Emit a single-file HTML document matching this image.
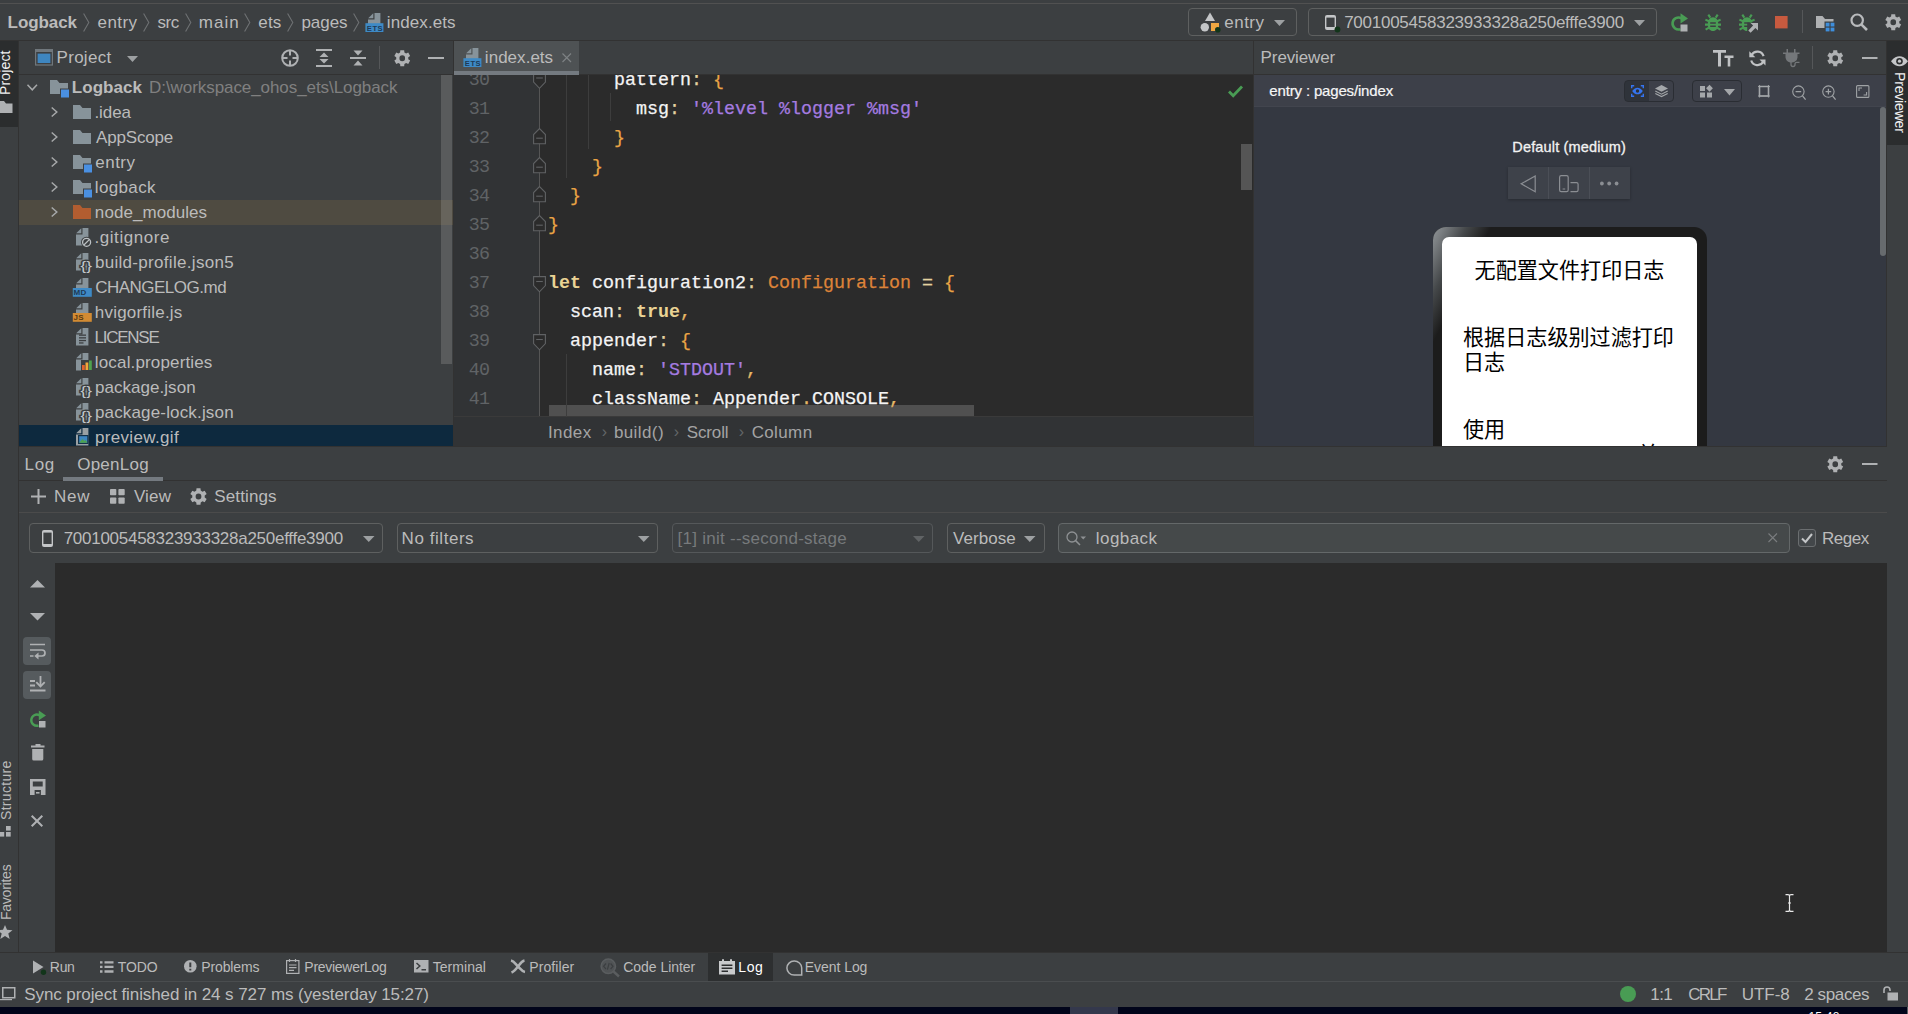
<!DOCTYPE html>
<html><head><meta charset="utf-8"><title>Logback</title>
<style>
html,body{margin:0;padding:0;background:#3c3f41;}
body{width:1908px;height:1014px;position:relative;overflow:hidden;font-family:"Liberation Sans", "Noto Sans CJK SC", sans-serif;}
#bg div{position:absolute;}
.t{position:absolute;white-space:pre;line-height:20px;}
svg{position:absolute;overflow:visible;}
#ed{position:absolute;left:454px;top:75px;width:799px;height:342px;overflow:hidden;font-family:"Liberation Mono", monospace;font-size:18.33px;}
#ed div{position:absolute;white-space:pre;line-height:29px;height:29px;}
.ln{left:0;width:35.5px;text-align:right;color:#606366;letter-spacing:-0.6px;}
.cl{left:94px;color:#f4f4f4;-webkit-text-stroke:0.25px;}
.k{color:#ead394;font-weight:700;-webkit-text-stroke:0;} .b{color:#e9a445;} .s{color:#a57be0;} .c{color:#dd8339;} .p{color:#e3d3a0;} .q{color:#e6b866;}
.vt{position:absolute;white-space:pre;line-height:20px;font-size:14.5px;transform-origin:0 0;}
#pv{position:absolute;left:1254px;top:107px;width:626px;height:339px;overflow:hidden;}
#ph{position:absolute;left:179px;top:120px;width:274px;height:400px;border-radius:13px;background:#1c1c1c;overflow:hidden;}
#gl{position:absolute;left:0;top:0;width:140px;height:140px;background:linear-gradient(116.6deg,#8f9497 0,#7a7e81 10px,#45484a 30px,#1c1c1c 52px);}
#sc{position:absolute;left:9px;top:10px;width:255px;height:400px;border-radius:7px;background:#fff;}
.z{position:absolute;font-family:"Liberation Sans","Noto Sans CJK SC",sans-serif;font-size:21.1px;line-height:24.5px;color:#000;white-space:normal;word-break:break-all;}
.box{position:absolute;border:1px solid #5e6060;border-radius:4px;box-sizing:border-box;}
</style></head><body>
<div id="bg">
<div style="left:0px;top:0px;width:1908px;height:3px;background:#3c3f41;"></div>
<div style="left:0px;top:3px;width:1908px;height:1px;background:#515151;"></div>
<div style="left:0px;top:4px;width:1908px;height:36px;background:#3c3f41;"></div>
<div style="left:0px;top:40px;width:1908px;height:1px;background:#323232;"></div>
<div style="left:0px;top:41px;width:18px;height:912px;background:#3c3f41;"></div>
<div style="left:18px;top:41px;width:1px;height:912px;background:#323232;"></div>
<div style="left:0px;top:41px;width:18px;height:86px;background:#2b2d2e;"></div>
<div style="left:19px;top:41px;width:434px;height:34px;background:#3c3f41;"></div>
<div style="left:19px;top:74px;width:434px;height:1px;background:#323232;"></div>
<div style="left:19px;top:75px;width:434px;height:371px;background:#3c3f41;"></div>
<div style="left:19px;top:200px;width:434px;height:25px;background:#4f4b41;"></div>
<div style="left:441px;top:75px;width:11px;height:289px;background:rgba(166,166,166,0.28);"></div>
<div style="left:19px;top:425px;width:434px;height:21px;background:#0d293e;"></div>
<div style="left:453px;top:41px;width:1px;height:405px;background:#323232;"></div>
<div style="left:454px;top:41px;width:799px;height:34px;background:#3c3f41;"></div>
<div style="left:454px;top:74px;width:799px;height:1px;background:#323232;"></div>
<div style="left:454px;top:41px;width:125px;height:33px;background:#4e5254;"></div>
<div style="left:454px;top:71px;width:125px;height:4px;background:#747a80;"></div>
<div style="left:454px;top:75px;width:799px;height:342px;background:#2b2b2b;"></div>
<div style="left:454px;top:75px;width:85px;height:342px;background:#313335;"></div>
<div style="left:539px;top:75px;width:1px;height:342px;background:#555555;"></div>
<div style="left:454px;top:417px;width:799px;height:29px;background:#313335;"></div>
<div style="left:454px;top:416px;width:799px;height:1px;background:#3a3a3a;"></div>
<div style="left:1241px;top:144px;width:11px;height:46px;background:#555555;"></div>
<div style="left:549px;top:405px;width:425px;height:11px;background:#505050;"></div>
<div style="left:566px;top:75px;width:1px;height:103px;background:#3d3d3d;"></div>
<div style="left:588px;top:75px;width:1px;height:74px;background:#3d3d3d;"></div>
<div style="left:610px;top:93px;width:1px;height:28px;background:#3d3d3d;"></div>
<div style="left:566px;top:354px;width:1px;height:63px;background:#3d3d3d;"></div>
<div style="left:1253px;top:41px;width:1px;height:405px;background:#323232;"></div>
<div style="left:1254px;top:41px;width:633px;height:34px;background:#3c3f41;"></div>
<div style="left:1254px;top:74px;width:633px;height:1px;background:#323232;"></div>
<div style="left:1254px;top:75px;width:633px;height:32px;background:#3d4049;"></div>
<div style="left:1254px;top:106px;width:633px;height:1px;background:#42454e;"></div>
<div style="left:1254px;top:107px;width:633px;height:339px;background:#343841;"></div>
<div style="left:1880px;top:107px;width:6px;height:149px;background:#676b6e;border-radius:3px"></div>
<div style="left:1886px;top:41px;width:1px;height:912px;background:#323232;"></div>
<div style="left:1887px;top:41px;width:21px;height:912px;background:#3c3f41;"></div>
<div style="left:1887px;top:41px;width:21px;height:104px;background:#2b2d2e;"></div>
<div style="left:19px;top:446px;width:1868px;height:507px;background:#3c3f41;"></div>
<div style="left:19px;top:446px;width:1868px;height:1px;background:#323232;"></div>
<div style="left:19px;top:480px;width:1868px;height:1px;background:#323232;"></div>
<div style="left:63px;top:477px;width:100px;height:4px;background:#747a80;"></div>
<div style="left:19px;top:512px;width:1868px;height:1px;background:#4b4b4b;"></div>
<div style="left:55px;top:563px;width:1832px;height:390px;background:#2b2b2b;"></div>
<div style="left:0px;top:953px;width:1908px;height:28px;background:#3c3f41;"></div>
<div style="left:0px;top:952px;width:1908px;height:1px;background:#323232;"></div>
<div style="left:708px;top:953px;width:65px;height:28px;background:#2d2f30;"></div>
<div style="left:0px;top:981px;width:1908px;height:1px;background:#4a4d4f;"></div>
<div style="left:0px;top:982px;width:1908px;height:25px;background:#3c3f41;"></div>
<div style="left:0px;top:1007px;width:1908px;height:7px;background:#01041a;"></div>
<div style="left:1070px;top:1007px;width:48px;height:7px;background:#34384c;"></div>
<div style="left:1907px;top:1007px;width:1px;height:7px;background:#5a5f64;"></div>
</div>
<div id="ed">
<div class="ln" style="top:-9.0px">30</div><div class="cl" style="top:-9.0px"><span class="d">      pattern</span><span class="p">:</span><span class="d"> </span><span class="b">{</span></div>
<div class="ln" style="top:20.0px">31</div><div class="cl" style="top:20.0px"><span class="d">        msg</span><span class="p">:</span><span class="d"> </span><span class="s">&#x27;%level %logger %msg&#x27;</span></div>
<div class="ln" style="top:49.0px">32</div><div class="cl" style="top:49.0px"><span class="d">      </span><span class="b">}</span></div>
<div class="ln" style="top:78.0px">33</div><div class="cl" style="top:78.0px"><span class="d">    </span><span class="b">}</span></div>
<div class="ln" style="top:107.0px">34</div><div class="cl" style="top:107.0px"><span class="d">  </span><span class="b">}</span></div>
<div class="ln" style="top:136.0px">35</div><div class="cl" style="top:136.0px"><span class="b">}</span></div>
<div class="ln" style="top:165.0px">36</div><div class="cl" style="top:165.0px"></div>
<div class="ln" style="top:194.0px">37</div><div class="cl" style="top:194.0px"><span class="k">let</span><span class="d"> configuration2</span><span class="p">:</span><span class="d"> </span><span class="c">Configuration</span><span class="d"> </span><span class="p">=</span><span class="d"> </span><span class="b">{</span></div>
<div class="ln" style="top:223.0px">38</div><div class="cl" style="top:223.0px"><span class="d">  scan</span><span class="p">:</span><span class="d"> </span><span class="k">true</span><span class="q">,</span></div>
<div class="ln" style="top:252.0px">39</div><div class="cl" style="top:252.0px"><span class="d">  appender</span><span class="p">:</span><span class="d"> </span><span class="b">{</span></div>
<div class="ln" style="top:281.0px">40</div><div class="cl" style="top:281.0px"><span class="d">    name</span><span class="p">:</span><span class="d"> </span><span class="s">&#x27;STDOUT&#x27;</span><span class="q">,</span></div>
<div class="ln" style="top:310.0px">41</div><div class="cl" style="top:310.0px"><span class="d">    className</span><span class="p">:</span><span class="d"> Appender</span><span class="q">.</span><span class="d">CONSOLE</span><span class="q">,</span></div>
</div>
<svg style="left:83px;top:13px" width="7" height="19" viewBox="0 0 7 19"><path fill="none" stroke="#6e7173" stroke-width="1.1" d="M0.6,0.4L5.8,9.5L0.6,18.6"/></svg>
<svg style="left:143px;top:13px" width="7" height="19" viewBox="0 0 7 19"><path fill="none" stroke="#6e7173" stroke-width="1.1" d="M0.6,0.4L5.8,9.5L0.6,18.6"/></svg>
<svg style="left:184.5px;top:13px" width="7" height="19" viewBox="0 0 7 19"><path fill="none" stroke="#6e7173" stroke-width="1.1" d="M0.6,0.4L5.8,9.5L0.6,18.6"/></svg>
<svg style="left:243.5px;top:13px" width="7" height="19" viewBox="0 0 7 19"><path fill="none" stroke="#6e7173" stroke-width="1.1" d="M0.6,0.4L5.8,9.5L0.6,18.6"/></svg>
<svg style="left:286.5px;top:13px" width="7" height="19" viewBox="0 0 7 19"><path fill="none" stroke="#6e7173" stroke-width="1.1" d="M0.6,0.4L5.8,9.5L0.6,18.6"/></svg>
<svg style="left:353px;top:13px" width="7" height="19" viewBox="0 0 7 19"><path fill="none" stroke="#6e7173" stroke-width="1.1" d="M0.6,0.4L5.8,9.5L0.6,18.6"/></svg>
<svg style="left:363.6px;top:13px" width="24" height="19" viewBox="-4 0 24 19"><path fill="#87939a" d="M6.5,0H12.4V17.6H0V6.5H6.5Z"/><path fill="#87939a" d="M5.3,0.2V5.3H0.2Z"/><rect x="-2.6" y="10.2" width="18" height="8.8" fill="#3e8ac6"/><text x="-1.2" y="17.6" font-size="7.6" font-weight="700" font-family="Liberation Sans, sans-serif" fill="#1e3a55" letter-spacing="0.5">ETS</text></svg>
<div class="box" style="left:1188px;top:8px;width:109px;height:28px"></div>
<svg style="left:1200px;top:12px" width="22" height="21" viewBox="0 0 22 21"><path fill="#c4c6c8" d="M10,0.5L15,9H5Z"/><circle cx="4.8" cy="15.2" r="4.2" fill="#c4c6c8"/><rect x="11" y="11" width="8" height="8" fill="#f0a742"/><circle cx="17.8" cy="17.8" r="2.8" fill="#12351a"/></svg>
<svg style="left:1273.5px;top:19.5px" width="11" height="6" viewBox="0 0 11 6"><path fill="#9da0a2" d="M0,0H11L5.5,6Z"/></svg>
<div class="box" style="left:1308px;top:8px;width:349px;height:28px"></div>
<svg style="left:1324.5px;top:14.5px" width="11" height="15" viewBox="0 0 11 15"><rect x="0" y="0" width="11" height="15" rx="2" fill="#c4c6c8"/><rect x="1.4" y="2.6" width="8.2" height="9.4" fill="#3c3f41"/></svg>
<svg style="left:1334px;top:26px" width="7" height="7" viewBox="0 0 7 7"><circle cx="3.5" cy="3.5" r="2.9" fill="#12351a"/></svg>
<svg style="left:1634px;top:19.5px" width="11" height="6" viewBox="0 0 11 6"><path fill="#9da0a2" d="M0,0H11L5.5,6Z"/></svg>
<svg style="left:1671px;top:13px" width="18" height="19" viewBox="0 0 18 19"><path fill="none" stroke="#499c54" stroke-width="2.6" d="M9.5,16.2A6,6 0 1 1 10.5,5.3"/><path fill="#499c54" d="M9.5,0.3L17,5.6L9.5,10.6Z"/><rect x="9.5" y="11.5" width="7" height="7" fill="#afb1b3"/></svg>
<svg style="left:1705px;top:13.5px" width="20" height="19" viewBox="0 0 20 19"><path fill="#499c54" d="M8,3.2C11.8,3.2 13.2,6.5 13.2,10.5C13.2,14.5 11,17 8,17C5,17 2.8,14.5 2.8,10.5C2.8,6.5 4.2,3.2 8,3.2Z"/><path stroke="#499c54" stroke-width="2.1" fill="none" d="M5.3,3.6L3.3,0.6M10.7,3.6L12.7,0.6M4,7.2L0.4,5.6M3.5,10.6H0M4,13.6L0.6,15.6M12,7.2L15.6,5.6M12.5,10.6H16M12,13.6L15.4,15.6"/><path stroke="#3c3f41" stroke-width="1.6" d="M5.2,9H10.8M5.2,12.3H10.8"/></svg>
<svg style="left:1739px;top:13.5px" width="20" height="19" viewBox="0 0 20 19"><path fill="#499c54" d="M8,3.2C11.8,3.2 13.2,6.5 13.2,10.5C13.2,14.5 11,17 8,17C5,17 2.8,14.5 2.8,10.5C2.8,6.5 4.2,3.2 8,3.2Z"/><path stroke="#499c54" stroke-width="2.1" fill="none" d="M5.3,3.6L3.3,0.6M10.7,3.6L12.7,0.6M4,7.2L0.4,5.6M3.5,10.6H0M4,13.6L0.6,15.6M12,7.2L15.6,5.6M12.5,10.6H16M12,13.6L15.4,15.6"/><path stroke="#3c3f41" stroke-width="1.6" d="M5.2,9H10.8M5.2,12.3H10.8"/><rect x="8.2" y="8.6" width="11" height="10" fill="#3c3f41"/><path fill="#afb1b3" d="M11.5,9H19V16.5L16.4,13.9L11.6,18.7L9.3,16.4L14.1,11.6Z"/></svg>
<svg style="left:1775px;top:16px" width="13" height="13" viewBox="0 0 13 13"><rect width="12.6" height="12.4" fill="#c75a3f"/></svg>
<svg style="left:1802px;top:10px" width="1" height="23" viewBox="0 0 1 23"><rect width="1" height="23" fill="#555759"/></svg>
<svg style="left:1816px;top:16px" width="19" height="16" viewBox="0 0 19 16"><path fill="#afb1b3" d="M0,0H6.5L9,3H17.5V12H0Z"/><rect x="8.5" y="5.5" width="10.5" height="10.5" fill="#3c3f41"/><rect x="9.7" y="6.7" width="3.8" height="3.8" fill="#3e8edc"/><rect x="14.6" y="6.7" width="3.8" height="3.8" fill="#3e8edc"/><rect x="9.7" y="11.6" width="3.8" height="3.8" fill="#3e8edc"/><rect x="14.6" y="11.6" width="3.8" height="3.8" fill="#3e8edc"/></svg>
<svg style="left:1850px;top:13px" width="18" height="18" viewBox="0 0 18 18"><circle cx="7.2" cy="7.2" r="5.7" fill="none" stroke="#b8babc" stroke-width="2.2"/><path stroke="#b8babc" stroke-width="2.6" d="M11.3,11.3L17,17"/></svg>
<svg style="left:1885px;top:13.5px" width="16.5" height="16.5" viewBox="0 0 16.5 16.5"><path fill-rule="evenodd" fill="#afb1b3" d="M6.09,2.54 L6.32,0.23 L10.18,0.23 L10.41,2.54 L12.12,3.53 L14.23,2.57 L16.16,5.91 L14.27,7.26 L14.27,9.24 L16.16,10.59 L14.23,13.93 L12.12,12.97 L10.41,13.96 L10.18,16.27 L6.32,16.27 L6.09,13.96 L4.38,12.97 L2.27,13.93 L0.34,10.59 L2.23,9.24 L2.23,7.26 L0.34,5.91 L2.27,2.57 L4.38,3.53Z M11.05,8.25 A2.805,2.805 0 1 0 5.45,8.25 A2.805,2.805 0 1 0 11.05,8.25Z"/></svg>
<svg style="left:35px;top:49px" width="18" height="17" viewBox="0 0 18 17"><rect width="18" height="16.6" fill="#70777c"/><rect x="1.2" y="3" width="15.6" height="12.4" fill="#3c3f41"/><rect x="2.6" y="4.6" width="12.8" height="9.4" fill="#3e86c0"/></svg>
<svg style="left:127px;top:55.5px" width="11" height="6" viewBox="0 0 11 6"><path fill="#9da0a2" d="M0,0H11L5.5,6Z"/></svg>
<svg style="left:281px;top:49px" width="18" height="18" viewBox="0 0 18 18"><circle cx="9" cy="9" r="7.8" fill="none" stroke="#afb1b3" stroke-width="2"/><path stroke="#afb1b3" stroke-width="2" d="M9,1V6.5M9,11.5V17M1,9H6.5M11.5,9H17"/></svg>
<svg style="left:316px;top:49px" width="16" height="18" viewBox="0 0 16 18"><rect y="0" width="16" height="2" fill="#afb1b3"/><rect y="16" width="16" height="2" fill="#afb1b3"/><path fill="#afb1b3" d="M8,3.5L12.5,8H3.5Z M8,14.5L12.5,10H3.5Z"/></svg>
<svg style="left:350px;top:49px" width="16" height="18" viewBox="0 0 16 18"><rect y="8" width="16" height="2" fill="#afb1b3"/><path fill="#afb1b3" d="M8,6.5L12.5,1.5H3.5Z M8,11.5L12.5,16.5H3.5Z"/></svg>
<svg style="left:379px;top:46px" width="1" height="23" viewBox="0 0 1 23"><rect width="1" height="23" fill="#555759"/></svg>
<svg style="left:394px;top:49.5px" width="16.5" height="16.5" viewBox="0 0 16.5 16.5"><path fill-rule="evenodd" fill="#afb1b3" d="M6.09,2.54 L6.32,0.23 L10.18,0.23 L10.41,2.54 L12.12,3.53 L14.23,2.57 L16.16,5.91 L14.27,7.26 L14.27,9.24 L16.16,10.59 L14.23,13.93 L12.12,12.97 L10.41,13.96 L10.18,16.27 L6.32,16.27 L6.09,13.96 L4.38,12.97 L2.27,13.93 L0.34,10.59 L2.23,9.24 L2.23,7.26 L0.34,5.91 L2.27,2.57 L4.38,3.53Z M11.05,8.25 A2.805,2.805 0 1 0 5.45,8.25 A2.805,2.805 0 1 0 11.05,8.25Z"/></svg>
<svg style="left:428px;top:57px" width="16" height="2" viewBox="0 0 16 2"><rect width="16" height="2" fill="#afb1b3"/></svg>
<svg style="left:27px;top:84px" width="10.5" height="6.5" viewBox="0 0 10.5 6.5"><path fill="none" stroke="#a6a8a9" stroke-width="1.5" d="M0.5,0.7L5.25,5.8L10.0,0.7"/></svg>
<svg style="left:50px;top:79.5px" width="20" height="19" viewBox="0 0 20 19"><path fill="#87939a" d="M0,0H7L9.5,3H18V14H0Z"/><rect x="10" y="8.5" width="9.5" height="9.5" fill="#3c3f41"/><rect x="11" y="9.5" width="8" height="8" fill="#4a90e2"/></svg>
<svg style="left:51px;top:107.0px" width="6.5" height="10" viewBox="0 0 6.5 10"><path fill="none" stroke="#a6a8a9" stroke-width="1.5" d="M0.7,0.5L5.8,5.0L0.7,9.5"/></svg>
<svg style="left:73px;top:104.5px" width="20" height="19" viewBox="0 0 20 19"><path fill="#87939a" d="M0,0H7L9.5,3H18V14H0Z"/></svg>
<svg style="left:51px;top:132.0px" width="6.5" height="10" viewBox="0 0 6.5 10"><path fill="none" stroke="#a6a8a9" stroke-width="1.5" d="M0.7,0.5L5.8,5.0L0.7,9.5"/></svg>
<svg style="left:73px;top:129.5px" width="20" height="19" viewBox="0 0 20 19"><path fill="#87939a" d="M0,0H7L9.5,3H18V14H0Z"/></svg>
<svg style="left:51px;top:157.0px" width="6.5" height="10" viewBox="0 0 6.5 10"><path fill="none" stroke="#a6a8a9" stroke-width="1.5" d="M0.7,0.5L5.8,5.0L0.7,9.5"/></svg>
<svg style="left:73px;top:154.5px" width="20" height="19" viewBox="0 0 20 19"><path fill="#87939a" d="M0,0H7L9.5,3H18V14H0Z"/><rect x="10" y="8.5" width="9.5" height="9.5" fill="#3c3f41"/><rect x="11" y="9.5" width="8" height="8" fill="#4a90e2"/></svg>
<svg style="left:51px;top:182.0px" width="6.5" height="10" viewBox="0 0 6.5 10"><path fill="none" stroke="#a6a8a9" stroke-width="1.5" d="M0.7,0.5L5.8,5.0L0.7,9.5"/></svg>
<svg style="left:73px;top:179.5px" width="20" height="19" viewBox="0 0 20 19"><path fill="#87939a" d="M0,0H7L9.5,3H18V14H0Z"/><rect x="10" y="8.5" width="9.5" height="9.5" fill="#3c3f41"/><rect x="11" y="9.5" width="8" height="8" fill="#4a90e2"/></svg>
<svg style="left:51px;top:207.0px" width="6.5" height="10" viewBox="0 0 6.5 10"><path fill="none" stroke="#a6a8a9" stroke-width="1.5" d="M0.7,0.5L5.8,5.0L0.7,9.5"/></svg>
<svg style="left:73px;top:204.5px" width="20" height="19" viewBox="0 0 20 19"><path fill="#b25d30" d="M0,0H7L9.5,3H18V14H0Z"/></svg>
<svg style="left:72px;top:228px" width="24" height="19" viewBox="-4 0 24 19"><path fill="#87939a" d="M6.5,0H12.4V17.6H0V6.5H6.5Z"/><path fill="#87939a" d="M5.3,0.2V5.3H0.2Z"/><circle cx="10.6" cy="14.3" r="5.6" fill="#3c3f41"/><circle cx="10.6" cy="14.3" r="4" fill="none" stroke="#bcc1c4" stroke-width="1.3"/><path d="M7.9,17L13.3,11.6" stroke="#bcc1c4" stroke-width="1.3"/></svg>
<svg style="left:72px;top:253px" width="24" height="19" viewBox="-4 0 24 19"><path fill="#87939a" d="M6.5,0H12.4V17.6H0V6.5H6.5Z"/><path fill="#87939a" d="M5.3,0.2V5.3H0.2Z"/><text x="4.6" y="16.6" font-size="12.5" font-family="Liberation Sans, sans-serif" fill="#c6cbce" stroke="#3c3f41" stroke-width="2.6" paint-order="stroke" textLength="11.4" lengthAdjust="spacingAndGlyphs">{}</text></svg>
<svg style="left:72px;top:278px" width="24" height="19" viewBox="-4 0 24 19"><path fill="#87939a" d="M6.5,0H12.4V17.6H0V6.5H6.5Z"/><path fill="#87939a" d="M5.3,0.2V5.3H0.2Z"/><rect x="-3.2" y="10" width="19" height="8.8" fill="#3e8ac6"/><text x="-2.4" y="17.4" font-size="8" font-weight="700" font-family="Liberation Sans, sans-serif" fill="#1e3a55" letter-spacing="0.3">MD</text></svg>
<svg style="left:72px;top:303px" width="24" height="19" viewBox="-4 0 24 19"><path fill="#87939a" d="M6.5,0H12.4V17.6H0V6.5H6.5Z"/><path fill="#87939a" d="M5.3,0.2V5.3H0.2Z"/><rect x="-3.2" y="10" width="19" height="8.8" fill="#d28b33"/><text x="-2.4" y="17.4" font-size="8" font-weight="700" font-family="Liberation Sans, sans-serif" fill="#5a3a12" letter-spacing="0.3">JS</text></svg>
<svg style="left:72px;top:328px" width="24" height="19" viewBox="-4 0 24 19"><path fill="#87939a" d="M6.5,0H12.4V17.6H0V6.5H6.5Z"/><path fill="#87939a" d="M5.3,0.2V5.3H0.2Z"/><rect x="3" y="6.5" width="7" height="1.3" fill="#3c3f41"/><rect x="3" y="9.2" width="7" height="1.3" fill="#3c3f41"/><rect x="3" y="11.9" width="7" height="1.3" fill="#3c3f41"/><rect x="3" y="14.3" width="4.5" height="1.3" fill="#3c3f41"/></svg>
<svg style="left:72px;top:353px" width="24" height="19" viewBox="-4 0 24 19"><path fill="#87939a" d="M6.5,0H12.4V17.6H0V6.5H6.5Z"/><path fill="#87939a" d="M5.3,0.2V5.3H0.2Z"/><rect x="5" y="7" width="11.5" height="11" fill="#3c3f41"/><rect x="6" y="12" width="2.8" height="5" fill="#e0632f"/><rect x="9.5" y="9.5" width="2.8" height="7.5" fill="#f2a73b"/><rect x="13" y="7.5" width="2.8" height="9.5" fill="#4ea24e"/></svg>
<svg style="left:72px;top:378px" width="24" height="19" viewBox="-4 0 24 19"><path fill="#87939a" d="M6.5,0H12.4V17.6H0V6.5H6.5Z"/><path fill="#87939a" d="M5.3,0.2V5.3H0.2Z"/><text x="4.6" y="16.6" font-size="12.5" font-family="Liberation Sans, sans-serif" fill="#c6cbce" stroke="#3c3f41" stroke-width="2.6" paint-order="stroke" textLength="11.4" lengthAdjust="spacingAndGlyphs">{}</text></svg>
<svg style="left:72px;top:403px" width="24" height="19" viewBox="-4 0 24 19"><path fill="#87939a" d="M6.5,0H12.4V17.6H0V6.5H6.5Z"/><path fill="#87939a" d="M5.3,0.2V5.3H0.2Z"/><text x="4.6" y="16.6" font-size="12.5" font-family="Liberation Sans, sans-serif" fill="#c6cbce" stroke="#3c3f41" stroke-width="2.6" paint-order="stroke" textLength="11.4" lengthAdjust="spacingAndGlyphs">{}</text></svg>
<svg style="left:72px;top:428px" width="24" height="19" viewBox="-4 0 24 19"><path fill="#9aa0a3" d="M6.5,0H12.4V17.6H0V6.5H6.5Z"/><path fill="#9aa0a3" d="M5.3,0.2V5.3H0.2Z"/><rect x="2" y="7" width="10.5" height="9" fill="#13324a"/><rect x="3.2" y="8.2" width="8.1" height="6.6" fill="#3e86c0"/><path d="M3.2,14.8L6.5,11L8.5,13L9.8,12L11.3,14.8Z" fill="#4ea24e"/></svg>
<svg style="left:461.6px;top:48px" width="24" height="19" viewBox="-4 0 24 19"><path fill="#87939a" d="M6.5,0H12.4V17.6H0V6.5H6.5Z"/><path fill="#87939a" d="M5.3,0.2V5.3H0.2Z"/><rect x="-2.6" y="10.2" width="18" height="8.8" fill="#3e8ac6"/><text x="-1.2" y="17.6" font-size="7.6" font-weight="700" font-family="Liberation Sans, sans-serif" fill="#1e3a55" letter-spacing="0.5">ETS</text></svg>
<svg style="left:561.5px;top:52.5px" width="9.5" height="9.5" viewBox="0 0 9.5 9.5"><path stroke="#7d8183" stroke-width="1.2" d="M0.5,0.5L9.0,9.0M9.0,0.5L0.5,9.0"/></svg>
<svg style="overflow:hidden;left:533px;top:75px" width="13" height="14.5" viewBox="0 2.5 13 14.5"><path fill="#2b2b2b" stroke="#606264" stroke-width="1.1" d="M0.6,0.6H12.4V9.6L6.5,15.8L0.6,9.6Z"/><path stroke="#606264" stroke-width="1.1" d="M3.2,5.5H9.8"/></svg>
<svg style="left:533px;top:127.5px" width="13" height="17" viewBox="0 0 13 17"><path fill="#2b2b2b" stroke="#606264" stroke-width="1.1" d="M0.6,15.8H12.4V6.6L6.5,0.6L0.6,6.6Z"/><path stroke="#606264" stroke-width="1.1" d="M3.2,10.2H9.8"/></svg>
<svg style="left:533px;top:156.5px" width="13" height="17" viewBox="0 0 13 17"><path fill="#2b2b2b" stroke="#606264" stroke-width="1.1" d="M0.6,15.8H12.4V6.6L6.5,0.6L0.6,6.6Z"/><path stroke="#606264" stroke-width="1.1" d="M3.2,10.2H9.8"/></svg>
<svg style="left:533px;top:185.5px" width="13" height="17" viewBox="0 0 13 17"><path fill="#2b2b2b" stroke="#606264" stroke-width="1.1" d="M0.6,15.8H12.4V6.6L6.5,0.6L0.6,6.6Z"/><path stroke="#606264" stroke-width="1.1" d="M3.2,10.2H9.8"/></svg>
<svg style="left:533px;top:214.5px" width="13" height="17" viewBox="0 0 13 17"><path fill="#2b2b2b" stroke="#606264" stroke-width="1.1" d="M0.6,15.8H12.4V6.6L6.5,0.6L0.6,6.6Z"/><path stroke="#606264" stroke-width="1.1" d="M3.2,10.2H9.8"/></svg>
<svg style="left:533px;top:275.5px" width="13" height="17" viewBox="0 0 13 17"><path fill="#2b2b2b" stroke="#606264" stroke-width="1.1" d="M0.6,0.6H12.4V9.6L6.5,15.8L0.6,9.6Z"/><path stroke="#606264" stroke-width="1.1" d="M3.2,5.5H9.8"/></svg>
<svg style="left:533px;top:333.5px" width="13" height="17" viewBox="0 0 13 17"><path fill="#2b2b2b" stroke="#606264" stroke-width="1.1" d="M0.6,0.6H12.4V9.6L6.5,15.8L0.6,9.6Z"/><path stroke="#606264" stroke-width="1.1" d="M3.2,5.5H9.8"/></svg>
<svg style="left:1228px;top:85px" width="15" height="13" viewBox="0 0 15 13"><path fill="none" stroke="#499c54" stroke-width="2.8" d="M1,6.5L5.2,10.7L14,1.5"/></svg>
<svg style="left:1713px;top:49.5px" width="21" height="17" viewBox="0 0 21 17"><path fill="#c0c2c4" d="M0,0H13V2.8H8V16.5H5V2.8H0Z M11.5,5.5H20.5V8H17.3V16.5H14.7V8H11.5Z"/></svg>
<svg style="left:1749px;top:50px" width="17" height="17" viewBox="0 0 17 17"><path fill="none" stroke="#c0c2c4" stroke-width="2.2" d="M14.6,6.2A6.6,6.6 0 0 0 2.6,5 M2.2,10.5A6.6,6.6 0 0 0 14.2,11.8"/><path fill="#c0c2c4" d="M0.3,1.2V7.2H6.3Z M16.5,15.6V9.6H10.5Z"/></svg>
<svg style="left:1782px;top:49px" width="19" height="19" viewBox="0 0 19 19"><path fill="#74777a" d="M4.5,0H6V3.5H12V0H13.5V3.5H17.5V5H15.5V8.5A6,6 0 0 1 10,13.5H8A6,6 0 0 1 3.5,8.5V5H1V3.5H4.5Z"/><path fill="none" stroke="#74777a" stroke-width="1.3" d="M9,13V15.5A2,2 0 0 0 13,15.5V15A1.6,1.6 0 0 1 14.8,13.4H17.5"/></svg>
<svg style="left:1812px;top:46px" width="1" height="23" viewBox="0 0 1 23"><rect width="1" height="23" fill="#555759"/></svg>
<svg style="left:1827px;top:50px" width="16.5" height="16.5" viewBox="0 0 16.5 16.5"><path fill-rule="evenodd" fill="#afb1b3" d="M6.09,2.54 L6.32,0.23 L10.18,0.23 L10.41,2.54 L12.12,3.53 L14.23,2.57 L16.16,5.91 L14.27,7.26 L14.27,9.24 L16.16,10.59 L14.23,13.93 L12.12,12.97 L10.41,13.96 L10.18,16.27 L6.32,16.27 L6.09,13.96 L4.38,12.97 L2.27,13.93 L0.34,10.59 L2.23,9.24 L2.23,7.26 L0.34,5.91 L2.27,2.57 L4.38,3.53Z M11.05,8.25 A2.805,2.805 0 1 0 5.45,8.25 A2.805,2.805 0 1 0 11.05,8.25Z"/></svg>
<svg style="left:1861.5px;top:57px" width="15.5" height="2" viewBox="0 0 15.5 2"><rect width="15.5" height="2" fill="#afb1b3"/></svg>
<div style="position:absolute;left:1624px;top:80px;width:50px;height:22px;box-sizing:border-box;border:1px solid #2a2d33;border-radius:4px;background:linear-gradient(90deg,#2f333a 0,#2f333a 24px,#3d4049 24px)"></div>
<svg style="left:1630.5px;top:85px" width="13" height="12" viewBox="0 0 13 12"><path fill="none" stroke="#3574f0" stroke-width="1.4" d="M0.7,3.2V0.7H3.2M9.8,0.7H12.3V3.2M12.3,8.8V11.3H9.8M3.2,11.3H0.7V8.8"/><path fill="#3574f0" d="M1.2,6C3,3.3 4.8,2.7 6.5,2.7S10,3.3 11.8,6C10,8.7 8.2,9.3 6.5,9.3S3,8.7 1.2,6Z"/><circle cx="6.5" cy="6" r="1.7" fill="#2e3239"/></svg>
<svg style="left:1654.5px;top:85px" width="13" height="12" viewBox="0 0 13 12"><path fill="#a4a7aa" d="M6.5,0L13,3.4L6.5,6.8L0,3.4Z"/><path fill="none" stroke="#a4a7aa" stroke-width="1.1" d="M0.3,6L6.5,9.2L12.7,6M0.3,8.4L6.5,11.6L12.7,8.4"/></svg>
<div style="position:absolute;left:1692px;top:80px;width:50px;height:22px;box-sizing:border-box;border:1px solid #2a2d33;border-radius:4px;"></div>
<svg style="left:1699.5px;top:85px" width="14" height="13" viewBox="0 0 14 13"><rect x="0" y="1" width="5" height="5" fill="#a4a7aa"/><rect x="0" y="7.5" width="5" height="5" fill="#a4a7aa"/><rect x="7" y="7.5" width="5" height="5" fill="#a4a7aa"/><path fill="#a4a7aa" d="M9.5,-0.2L12.9,3.3L9.5,6.8L6.1,3.3Z"/></svg>
<svg style="left:1723.5px;top:88.5px" width="11" height="6.5" viewBox="0 0 11 6.5"><path fill="#a4a7aa" d="M0,0H11L5.5,6.5Z"/></svg>
<svg style="left:1758px;top:85px" width="12" height="13" viewBox="0 0 12 13"><rect x="1.5" y="1.5" width="9" height="9.5" fill="none" stroke="#a4a7aa" stroke-width="1.5"/><path stroke="#a4a7aa" stroke-width="1.2" d="M0,1.5H12M0,11H12M1.5,0V12.5M10.5,0V12.5" opacity="0.85"/></svg>
<svg style="left:1791.5px;top:84.5px" width="15" height="16" viewBox="0 0 15 16"><circle cx="6.4" cy="6.6" r="5.7" fill="none" stroke="#9fa2a5" stroke-width="1.1"/><path stroke="#9fa2a5" stroke-width="1.2" d="M3.6,6.6H9.2M10.6,11L13.6,14.6"/></svg>
<svg style="left:1821.5px;top:84.5px" width="15" height="16" viewBox="0 0 15 16"><circle cx="6.4" cy="6.6" r="5.7" fill="none" stroke="#9fa2a5" stroke-width="1.1"/><path stroke="#9fa2a5" stroke-width="1.2" d="M3.6,6.6H9.2M6.4,3.8V9.4M10.6,11L13.6,14.6"/></svg>
<svg style="left:1856px;top:84.5px" width="14" height="13" viewBox="0 0 14 13"><rect x="0.6" y="0.6" width="12.3" height="11.8" rx="1" fill="none" stroke="#9fa2a5" stroke-width="1.1"/><path fill="none" stroke="#9fa2a5" stroke-width="1.1" d="M3,6V3H6M7.6,10H10.6V7"/></svg>
<div style="position:absolute;left:1508px;top:167px;width:122px;height:32px;background:#3e424a;box-shadow:0 1px 3px rgba(0,0,0,0.25)"></div>
<div style="position:absolute;left:1548px;top:167px;width:1px;height:32px;background:#4b4f57"></div>
<div style="position:absolute;left:1589px;top:167px;width:1px;height:32px;background:#4b4f57"></div>
<svg style="left:1519.5px;top:174.5px" width="17" height="18" viewBox="0 0 17 18"><path fill="none" stroke="#8b8e93" stroke-width="1.2" d="M15.2,1L1.2,8.8L15.2,16.8Z"/></svg>
<svg style="left:1559px;top:174.5px" width="21" height="18" viewBox="0 0 21 18"><rect x="0.6" y="0.6" width="8.6" height="16" rx="1.6" fill="none" stroke="#8b8e93" stroke-width="1.2"/><path stroke="#8b8e93" stroke-width="1" d="M3.6,14H6.2"/><path fill="none" stroke="#8b8e93" stroke-width="1.2" d="M11.5,7.6H17.5A1.6,1.6 0 0 1 19.1,9.2V15A1.6,1.6 0 0 1 17.5,16.6H11.5"/></svg>
<svg style="left:1599px;top:181px" width="21" height="5" viewBox="0 0 21 5"><circle cx="2.9" cy="2.5" r="1.9" fill="#8b8e93"/><circle cx="10.2" cy="2.5" r="1.9" fill="#8b8e93"/><circle cx="17.6" cy="2.5" r="1.9" fill="#8b8e93"/></svg>
<svg style="left:1827px;top:456px" width="16.5" height="16.5" viewBox="0 0 16.5 16.5"><path fill-rule="evenodd" fill="#afb1b3" d="M6.09,2.54 L6.32,0.23 L10.18,0.23 L10.41,2.54 L12.12,3.53 L14.23,2.57 L16.16,5.91 L14.27,7.26 L14.27,9.24 L16.16,10.59 L14.23,13.93 L12.12,12.97 L10.41,13.96 L10.18,16.27 L6.32,16.27 L6.09,13.96 L4.38,12.97 L2.27,13.93 L0.34,10.59 L2.23,9.24 L2.23,7.26 L0.34,5.91 L2.27,2.57 L4.38,3.53Z M11.05,8.25 A2.805,2.805 0 1 0 5.45,8.25 A2.805,2.805 0 1 0 11.05,8.25Z"/></svg>
<svg style="left:1861.5px;top:463px" width="15.5" height="2" viewBox="0 0 15.5 2"><rect width="15.5" height="2" fill="#afb1b3"/></svg>
<svg style="left:31px;top:489px" width="15" height="15" viewBox="0 0 15 15"><path stroke="#afb1b3" stroke-width="2" d="M7.5,0V15M0,7.5H15"/></svg>
<svg style="left:110px;top:489px" width="15" height="15" viewBox="0 0 15 15"><rect x="0" y="0" width="6.3" height="6.3" rx="0.8" fill="#afb1b3"/><rect x="8.4" y="0" width="6.3" height="6.3" rx="0.8" fill="#afb1b3"/><rect x="0" y="8.4" width="6.3" height="6.3" rx="0.8" fill="#afb1b3"/><rect x="8.4" y="8.4" width="6.3" height="6.3" rx="0.8" fill="#afb1b3"/></svg>
<svg style="left:190px;top:488px" width="17" height="17" viewBox="0 0 17 17"><path fill-rule="evenodd" fill="#afb1b3" d="M6.28,2.62 L6.52,0.23 L10.48,0.23 L10.72,2.62 L12.48,3.63 L14.67,2.65 L16.65,6.09 L14.71,7.48 L14.71,9.52 L16.65,10.91 L14.67,14.35 L12.48,13.37 L10.72,14.38 L10.48,16.77 L6.52,16.77 L6.28,14.38 L4.52,13.37 L2.33,14.35 L0.35,10.91 L2.29,9.52 L2.29,7.48 L0.35,6.09 L2.33,2.65 L4.52,3.63Z M11.39,8.5 A2.89,2.89 0 1 0 5.61,8.5 A2.89,2.89 0 1 0 11.39,8.5Z"/></svg>
<div class="box" style="left:29px;top:523px;width:354px;height:30px"></div>
<svg style="left:42px;top:530px" width="11" height="17" viewBox="0 0 11 17"><rect x="0" y="0" width="11" height="17" rx="2" fill="#c4c6c8"/><rect x="1.4" y="2.6" width="8.2" height="11.4" fill="#3c3f41"/></svg>
<svg style="left:362.5px;top:536px" width="11.5" height="6" viewBox="0 0 11.5 6"><path fill="#9da0a2" d="M0,0H11.5L5.75,6Z"/></svg>
<div class="box" style="left:397px;top:523px;width:261px;height:30px"></div>
<svg style="left:638px;top:536px" width="11.5" height="6" viewBox="0 0 11.5 6"><path fill="#9da0a2" d="M0,0H11.5L5.75,6Z"/></svg>
<div class="box" style="left:672px;top:523px;width:261px;height:30px;border-color:#55585a"></div>
<svg style="left:913px;top:536px" width="11.5" height="6" viewBox="0 0 11.5 6"><path fill="#606365" d="M0,0H11.5L5.75,6Z"/></svg>
<div class="box" style="left:947px;top:523px;width:97.5px;height:30px"></div>
<svg style="left:1024px;top:536px" width="11.5" height="6" viewBox="0 0 11.5 6"><path fill="#9da0a2" d="M0,0H11.5L5.75,6Z"/></svg>
<div class="box" style="left:1057.5px;top:523px;width:732.5px;height:30px;background:#45494a;border-color:#646869"></div>
<svg style="left:1066px;top:531px" width="21" height="15" viewBox="0 0 21 15"><circle cx="6" cy="6" r="5" fill="none" stroke="#8e9193" stroke-width="1.3"/><path stroke="#8e9193" stroke-width="1.5" d="M9.6,9.6L14,14"/><path fill="#8e9193" d="M14.5,5.5H20L17.25,8.5Z"/></svg>
<svg style="left:1767.5px;top:533px" width="9.5" height="9.5" viewBox="0 0 9.5 9.5"><path stroke="#7a7d7f" stroke-width="1.1" d="M0.5,0.5L9.0,9.0M9.0,0.5L0.5,9.0"/></svg>
<div style="position:absolute;left:1798px;top:529px;width:18px;height:18px;box-sizing:border-box;border:1px solid #6b6e70;border-radius:3px;background:#43474a"></div>
<svg style="left:1801px;top:533px" width="12" height="11" viewBox="0 0 12 11"><path fill="none" stroke="#c4c6c8" stroke-width="2" d="M1,5.5L4.5,9L11,1"/></svg>
<svg style="left:30px;top:580px" width="15" height="8" viewBox="0 0 15 8"><path fill="#afb1b3" d="M7.5,0L15,7.5H0Z"/></svg>
<svg style="left:30px;top:613px" width="15" height="8" viewBox="0 0 15 8"><path fill="#afb1b3" d="M0,0H15L7.5,7.5Z"/></svg>
<div style="position:absolute;left:23px;top:637px;width:28px;height:28px;border-radius:4px;background:#565b5e"></div>
<svg style="left:29.5px;top:642.8px" width="16" height="16" viewBox="0 0 16 16"><path fill="none" stroke="#afb1b3" stroke-width="1.7" d="M0,1.5H15M0,7H12A3,3 0 0 1 12,13H7.5M0,13H3.5"/><path fill="#afb1b3" d="M8.5,9.6V16.4L4.3,13Z"/></svg>
<div style="position:absolute;left:23px;top:671px;width:28px;height:28px;border-radius:4px;background:#565b5e"></div>
<svg style="left:29.5px;top:675.5px" width="16" height="16" viewBox="0 0 16 16"><path stroke="#afb1b3" stroke-width="1.8" d="M0,5H5M0,9.5H5M0,14.5H15.5M10.5,0V10"/><path fill="none" stroke="#afb1b3" stroke-width="1.8" d="M6.3,6.2L10.5,10.5L14.7,6.2"/></svg>
<svg style="left:29.5px;top:710px" width="17" height="18" viewBox="0 0 17 18"><path fill="none" stroke="#499c54" stroke-width="2.4" d="M8.5,15.5A5.6,5.6 0 1 1 9.5,5.2"/><path fill="#499c54" d="M8.8,0.5L16,5.5L8.8,10.2Z"/><rect x="9" y="11" width="6.5" height="6.5" fill="#afb1b3"/></svg>
<svg style="left:30.5px;top:744px" width="14" height="17" viewBox="0 0 14 17"><path fill="#afb1b3" d="M4.5,0H9.5V1.5H13.5V3.5H0V1.5H4.5Z M1.2,5H12.3V15A1.5,1.5 0 0 1 10.8,16.5H2.7A1.5,1.5 0 0 1 1.2,15Z"/></svg>
<svg style="left:29.5px;top:779px" width="16" height="16" viewBox="0 0 16 16"><path fill="#afb1b3" fill-rule="evenodd" d="M0,0H15.5V16H0Z M2.8,2.6V7.4H12.7V2.6Z M4.6,11V16H10.9V11Z"/><rect x="6" y="13" width="3.5" height="1.6" fill="#afb1b3"/></svg>
<svg style="left:31px;top:815px" width="12" height="12" viewBox="0 0 12 12"><path stroke="#afb1b3" stroke-width="2" d="M0.7,0.7L11.3,11.3M11.3,0.7L0.7,11.3"/></svg>
<svg style="left:33px;top:960px" width="14" height="16" viewBox="0 0 14 16"><path fill="#afb1b3" d="M0,0.5L10.5,7L0,13.5Z"/><circle cx="10.5" cy="12.2" r="2.7" fill="#12351a"/></svg>
<svg style="left:100px;top:960.5px" width="14" height="12" viewBox="0 0 14 12"><path stroke="#afb1b3" stroke-width="2.3" d="M0,1.3H2.5M4.5,1.3H13.5M0,5.9H2.5M4.5,5.9H13.5M0,10.5H2.5M4.5,10.5H13.5"/></svg>
<svg style="left:184px;top:960px" width="13" height="13" viewBox="0 0 13 13"><circle cx="6.3" cy="6.3" r="6.3" fill="#afb1b3"/><path stroke="#3c3f41" stroke-width="2" d="M6.3,2.5V7.3M6.3,8.8V10.6"/></svg>
<svg style="left:286px;top:959px" width="14" height="15" viewBox="0 0 14 15"><rect x="0.6" y="1.6" width="12.3" height="12.8" fill="none" stroke="#afb1b3" stroke-width="1.2"/><path stroke="#afb1b3" stroke-width="1.2" d="M3.5,0V3M9.5,0V3M3,6H10.5M3,8.7H10.5M3,11.4H8"/></svg>
<svg style="left:414px;top:960px" width="15" height="13" viewBox="0 0 15 13"><rect width="14.5" height="12.5" fill="#afb1b3"/><path fill="none" stroke="#3c3f41" stroke-width="1.5" d="M2.5,3L5.8,6L2.5,9M7.5,9.8H12"/></svg>
<svg style="left:510px;top:960px" width="16" height="13" viewBox="0 0 16 13"><path fill="none" stroke="#afb1b3" stroke-width="2.6" d="M1,0.5C4,1 5.5,4 8,6.5S12,11.5 15,12M14.5,0.5C11.5,1 10.3,3.5 8,6.5S4,11.5 1.5,12.5"/></svg>
<svg style="left:600px;top:958px" width="20" height="19" viewBox="0 0 20 19"><circle cx="8.3" cy="8.3" r="7.2" fill="#505355" stroke="#5a5d5f" stroke-width="1.5"/><path stroke="#5a5d5f" stroke-width="2.4" d="M13.5,13.5L19,18.5"/><path fill="none" stroke="#3c3f41" stroke-width="1.2" d="M6,5.5L3.6,8.3L6,11M10.6,5.5L13,8.3L10.6,11M9.2,5L7.4,11.6"/></svg>
<svg style="left:719px;top:959px" width="16" height="16" viewBox="0 0 16 16"><path fill="#c8cacc" d="M0,2H3V0.3H5V2H11V0.3H13V2H16V15.5H0Z"/><path stroke="#2d2f30" stroke-width="1.4" d="M2.6,6.2H13.4M2.6,9.2H13.4M2.6,12.2H9"/></svg>
<svg style="left:786px;top:959.5px" width="17" height="16" viewBox="0 0 17 16"><path fill="none" stroke="#afb1b3" stroke-width="1.5" d="M15.7,15V7.8A7.4,7 0 1 0 8.2,15Z"/></svg>
<svg style="left:2px;top:987px" width="16" height="14" viewBox="0 0 16 14"><rect x="0.75" y="0.75" width="12" height="10" fill="none" stroke="#afb1b3" stroke-width="1.5"/><path stroke="#afb1b3" stroke-width="1.2" d="M-2,12.6H10"/></svg>
<svg style="left:1620px;top:986px" width="16" height="16" viewBox="0 0 16 16"><circle cx="8" cy="8" r="8" fill="#499c54"/></svg>
<svg style="left:1883px;top:986px" width="16" height="15" viewBox="0 0 16 15"><path fill="none" stroke="#afb1b3" stroke-width="1.6" d="M1,7V4A3,3 0 0 1 7,4V5"/><rect x="4.5" y="6.5" width="10.5" height="8" fill="#afb1b3"/></svg>
<svg style="left:0px;top:101px" width="13" height="12" viewBox="0 0 13 12"><path fill="#afb1b3" d="M-5,0H4L6,2.5H12.5V12H-5Z"/></svg>
<svg style="left:0px;top:826px" width="12" height="12" viewBox="0 0 12 12"><rect x="-0.5" y="6" width="4.7" height="4.6" fill="#afb1b3"/><rect x="6" y="6" width="4.7" height="4.6" fill="#afb1b3"/><rect x="6" y="0" width="4.7" height="4.6" fill="#afb1b3"/></svg>
<svg style="left:0px;top:925px" width="13" height="14" viewBox="0 0 13 14"><path fill="#afb1b3" d="M5,0L7,4.8L12.5,5.2L8.3,8.6L9.7,14L5,11L0.3,14L1.7,8.6L-2.5,5.2L3,4.8Z"/></svg>
<svg style="left:1891px;top:56px" width="17" height="10.5" viewBox="0 0 17 10.5"><path fill="#c4c6c8" d="M0,5.2C3,1.3 5.8,0.2 8.5,0.2S14,1.3 17,5.2C14,9.1 11.2,10.3 8.5,10.3S3,9.1 0,5.2Z"/><circle cx="8.5" cy="5.2" r="3.3" fill="#2b2d2e"/><circle cx="8.5" cy="5.2" r="1.6" fill="#c4c6c8"/></svg>
<svg style="left:1785px;top:894px" width="9" height="18" viewBox="0 0 9 18"><path fill="none" stroke="#e8e8e8" stroke-width="1.2" d="M0.5,0.6H3A1.5,1.5 0 0 1 4.5,2.1V15.9A1.5,1.5 0 0 1 3,17.4H0.5M8.5,0.6H6A1.5,1.5 0 0 0 4.5,2.1M8.5,17.4H6A1.5,1.5 0 0 1 4.5,15.9M3,9H6"/></svg>
<div style="position:absolute;left:1800px;top:1007px;width:60px;height:7px;overflow:hidden"><span style="position:absolute;left:8.5px;top:3.5px;font-size:12px;line-height:12px;color:#fff;letter-spacing:0.2px">15:48</span></div>
<div id="pv">
<div id="ph"><div id="gl"></div><div id="sc">
<div class="z" style="top:22px;left:0;width:255px;text-align:center">无配置文件打印日志</div>
<div class="z" style="top:89px;left:21px;width:216px">根据日志级别过滤打印日志</div>
<div class="z" style="top:181px;left:21px;width:216px">使用</div>
<div class="z" style="top:205.5px;left:195.5px;width:30px">关</div>
</div></div>
</div>
<span class="t" style="left:7.61px;top:12.00px;line-height:21px;font-size:17px;color:#bbbbbb;letter-spacing:-0.088px;font-weight:700;">Logback</span>
<span class="t" style="left:97.53px;top:12.00px;line-height:21px;font-size:17px;color:#bbbbbb;letter-spacing:0.428px;">entry</span>
<span class="t" style="left:157.53px;top:12.00px;line-height:21px;font-size:17px;color:#bbbbbb;letter-spacing:-0.495px;">src</span>
<span class="t" style="left:198.87px;top:12.00px;line-height:21px;font-size:17px;color:#bbbbbb;letter-spacing:0.962px;">main</span>
<span class="t" style="left:258.28px;top:12.00px;line-height:21px;font-size:17px;color:#bbbbbb;letter-spacing:0.204px;">ets</span>
<span class="t" style="left:301.40px;top:12.00px;line-height:21px;font-size:17px;color:#bbbbbb;letter-spacing:-0.027px;">pages</span>
<span class="t" style="left:386.86px;top:12.00px;line-height:21px;font-size:17px;color:#bbbbbb;letter-spacing:0.089px;">index.ets</span>
<span class="t" style="left:1224.28px;top:12.00px;line-height:21px;font-size:17px;color:#bbbbbb;letter-spacing:0.490px;">entry</span>
<span class="t" style="left:1344.13px;top:12.00px;line-height:21px;font-size:17px;color:#bbbbbb;letter-spacing:-0.248px;">7001005458323933328a250efffe3900</span>
<span class="t" style="left:56.61px;top:47.00px;line-height:21px;font-size:17px;color:#bbbbbb;letter-spacing:0.268px;">Project</span>
<span class="t" style="left:71.86px;top:77.00px;line-height:21px;font-size:17px;color:#bbbbbb;letter-spacing:0.037px;font-weight:700;">Logback</span>
<span class="t" style="left:94.45px;top:102.00px;line-height:21px;font-size:17px;color:#bbbbbb;letter-spacing:-0.078px;">.idea</span>
<span class="t" style="left:95.97px;top:127.00px;line-height:21px;font-size:17px;color:#bbbbbb;letter-spacing:-0.166px;">AppScope</span>
<span class="t" style="left:95.28px;top:152.00px;line-height:21px;font-size:17px;color:#bbbbbb;letter-spacing:0.490px;">entry</span>
<span class="t" style="left:94.85px;top:177.00px;line-height:21px;font-size:17px;color:#bbbbbb;letter-spacing:0.338px;">logback</span>
<span class="t" style="left:94.87px;top:202.00px;line-height:21px;font-size:17px;color:#bbbbbb;letter-spacing:0.065px;">node_modules</span>
<span class="t" style="left:94.45px;top:227.00px;line-height:21px;font-size:17px;color:#bbbbbb;letter-spacing:0.569px;">.gitignore</span>
<span class="t" style="left:94.90px;top:252.00px;line-height:21px;font-size:17px;color:#bbbbbb;letter-spacing:0.309px;">build-profile.json5</span>
<span class="t" style="left:95.14px;top:277.00px;line-height:21px;font-size:17px;color:#bbbbbb;letter-spacing:-0.501px;">CHANGELOG.md</span>
<span class="t" style="left:94.82px;top:302.00px;line-height:21px;font-size:17px;color:#bbbbbb;letter-spacing:0.209px;">hvigorfile.js</span>
<span class="t" style="left:94.61px;top:327.00px;line-height:21px;font-size:17px;color:#bbbbbb;letter-spacing:-1.271px;">LICENSE</span>
<span class="t" style="left:94.85px;top:352.00px;line-height:21px;font-size:17px;color:#bbbbbb;letter-spacing:0.149px;">local.properties</span>
<span class="t" style="left:94.90px;top:377.00px;line-height:21px;font-size:17px;color:#bbbbbb;letter-spacing:0.047px;">package.json</span>
<span class="t" style="left:94.90px;top:402.00px;line-height:21px;font-size:17px;color:#bbbbbb;letter-spacing:0.164px;">package-lock.json</span>
<span class="t" style="left:94.90px;top:427.00px;line-height:21px;font-size:17px;color:#bbbbbb;letter-spacing:0.350px;">preview.gif</span>
<span class="t" style="left:149.11px;top:77.00px;line-height:21px;font-size:17px;color:#808080;letter-spacing:-0.073px;">D:\workspace_ohos_ets\Logback</span>
<span class="t" style="left:484.86px;top:47.00px;line-height:21px;font-size:17px;color:#bbbbbb;letter-spacing:0.026px;">index.ets</span>
<span class="t" style="left:547.93px;top:422.00px;line-height:21px;font-size:17px;color:#a4a4a4;letter-spacing:0.416px;">Index</span>
<span class="t" style="left:613.90px;top:422.00px;line-height:21px;font-size:17px;color:#a4a4a4;letter-spacing:0.402px;">build()</span>
<span class="t" style="left:686.73px;top:422.00px;line-height:21px;font-size:17px;color:#a4a4a4;letter-spacing:-0.120px;">Scroll</span>
<span class="t" style="left:751.64px;top:422.00px;line-height:21px;font-size:17px;color:#a4a4a4;letter-spacing:0.378px;">Column</span>
<span class="t" style="left:601.80px;top:422.00px;line-height:19px;font-size:16px;color:#636668;letter-spacing:0.000px;">›</span>
<span class="t" style="left:673.80px;top:422.00px;line-height:19px;font-size:16px;color:#636668;letter-spacing:0.000px;">›</span>
<span class="t" style="left:738.80px;top:422.00px;line-height:19px;font-size:16px;color:#636668;letter-spacing:0.000px;">›</span>
<span class="t" style="left:1260.61px;top:47.00px;line-height:21px;font-size:17px;color:#bbbbbb;letter-spacing:-0.113px;">Previewer</span>
<span class="t" style="left:1269.36px;top:81.00px;line-height:19px;font-size:15px;color:#f6f6f6;letter-spacing:-0.164px;-webkit-text-stroke:0.2px #f6f6f6;">entry : pages/index</span>
<span class="t" style="left:1512.31px;top:138.00px;line-height:18px;font-size:14.5px;color:#f2f2f2;letter-spacing:0.159px;-webkit-text-stroke:0.3px #f2f2f2;">Default (medium)</span>
<span class="t" style="left:24.61px;top:454.00px;line-height:21px;font-size:17px;color:#bbbbbb;letter-spacing:0.563px;">Log</span>
<span class="t" style="left:77.19px;top:454.00px;line-height:21px;font-size:17px;color:#bbbbbb;letter-spacing:0.242px;">OpenLog</span>
<span class="t" style="left:54.11px;top:486.00px;line-height:21px;font-size:17px;color:#bbbbbb;letter-spacing:0.672px;">New</span>
<span class="t" style="left:133.93px;top:486.00px;line-height:21px;font-size:17px;color:#bbbbbb;letter-spacing:0.164px;">View</span>
<span class="t" style="left:214.23px;top:486.00px;line-height:21px;font-size:17px;color:#bbbbbb;letter-spacing:0.137px;">Settings</span>
<span class="t" style="left:63.63px;top:528.00px;line-height:21px;font-size:17px;color:#bbbbbb;letter-spacing:-0.265px;">7001005458323933328a250efffe3900</span>
<span class="t" style="left:401.61px;top:528.00px;line-height:21px;font-size:17px;color:#bbbbbb;letter-spacing:0.549px;">No filters</span>
<span class="t" style="left:677.54px;top:528.00px;line-height:21px;font-size:17px;color:#777a7c;letter-spacing:0.261px;">[1] init --second-stage</span>
<span class="t" style="left:952.93px;top:528.00px;line-height:21px;font-size:17px;color:#bbbbbb;letter-spacing:0.075px;">Verbose</span>
<span class="t" style="left:1095.85px;top:528.00px;line-height:21px;font-size:17px;color:#bbbbbb;letter-spacing:0.421px;">logback</span>
<span class="t" style="left:1822.11px;top:528.00px;line-height:21px;font-size:17px;color:#bbbbbb;letter-spacing:-0.516px;">Regex</span>
<span class="t" style="left:49.85px;top:958.00px;line-height:18px;font-size:14px;color:#bbbbbb;letter-spacing:-0.312px;">Run</span>
<span class="t" style="left:117.69px;top:958.00px;line-height:18px;font-size:14px;color:#bbbbbb;letter-spacing:-0.068px;">TODO</span>
<span class="t" style="left:201.35px;top:958.00px;line-height:18px;font-size:14px;color:#bbbbbb;letter-spacing:-0.140px;">Problems</span>
<span class="t" style="left:304.35px;top:958.00px;line-height:18px;font-size:14px;color:#bbbbbb;letter-spacing:-0.277px;">PreviewerLog</span>
<span class="t" style="left:432.69px;top:958.00px;line-height:18px;font-size:14px;color:#bbbbbb;letter-spacing:0.050px;">Terminal</span>
<span class="t" style="left:529.35px;top:958.00px;line-height:18px;font-size:14px;color:#bbbbbb;letter-spacing:0.077px;">Profiler</span>
<span class="t" style="left:623.29px;top:958.00px;line-height:18px;font-size:14px;color:#bbbbbb;letter-spacing:-0.044px;">Code Linter</span>
<span class="t" style="left:738.35px;top:958.00px;line-height:18px;font-size:14px;color:#ffffff;letter-spacing:0.596px;">Log</span>
<span class="t" style="left:804.85px;top:958.00px;line-height:18px;font-size:14px;color:#bbbbbb;letter-spacing:-0.062px;">Event Log</span>
<span class="t" style="left:24.23px;top:984.00px;line-height:21px;font-size:17px;color:#bbbbbb;letter-spacing:-0.082px;">Sync project finished in 24 s 727 ms (yesterday 15:27)</span>
<span class="t" style="left:1650.21px;top:984.00px;line-height:21px;font-size:17px;color:#bbbbbb;letter-spacing:-0.504px;">1:1</span>
<span class="t" style="left:1688.14px;top:984.00px;line-height:21px;font-size:17px;color:#bbbbbb;letter-spacing:-1.716px;">CRLF</span>
<span class="t" style="left:1741.69px;top:984.00px;line-height:21px;font-size:17px;color:#bbbbbb;letter-spacing:-0.028px;">UTF-8</span>
<span class="t" style="left:1804.15px;top:984.00px;line-height:21px;font-size:17px;color:#bbbbbb;letter-spacing:-0.367px;">2 spaces</span>
<span class="t" style="left:-4.00px;top:95.15px;line-height:18px;font-size:14px;color:#f0f0f0;letter-spacing:0.146px;transform:rotate(-90deg);transform-origin:0 0;">Project</span>
<span class="t" style="left:-3.50px;top:819.64px;line-height:18px;font-size:14px;color:#bbbbbb;letter-spacing:0.307px;transform:rotate(-90deg);transform-origin:0 0;">Structure</span>
<span class="t" style="left:-3.50px;top:920.15px;line-height:18px;font-size:14px;color:#bbbbbb;letter-spacing:-0.240px;transform:rotate(-90deg);transform-origin:0 0;">Favorites</span>
<span class="t" style="left:1909.00px;top:71.85px;line-height:18px;font-size:14px;color:#f0f0f0;letter-spacing:-0.170px;transform:rotate(90deg);transform-origin:0 0;">Previewer</span>
</body></html>
